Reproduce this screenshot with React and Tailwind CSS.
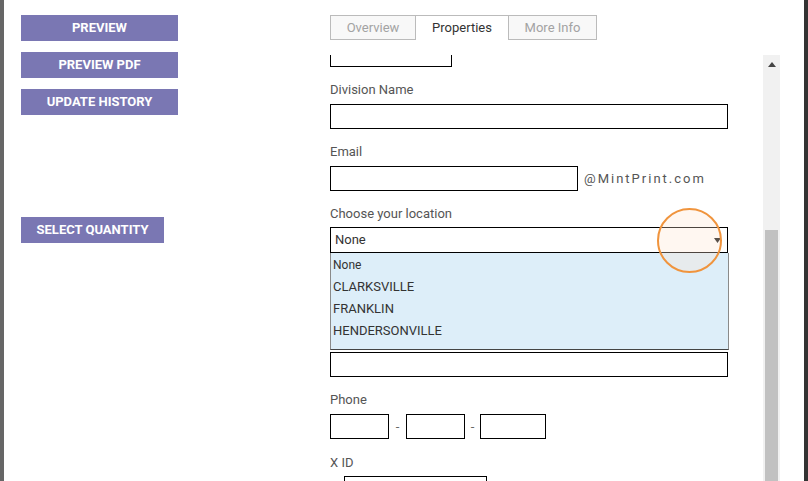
import React from "react";

const ACTIONS = ["PREVIEW", "PREVIEW PDF", "UPDATE HISTORY"];
const LOCATIONS = ["None", "CLARKSVILLE", "FRANKLIN", "HENDERSONVILLE"];

function ActionButton({ label, className = "w-[157px]" }) {
  return (
    <button
      className={`flex h-[26px] items-center justify-center bg-[#7a77b3] text-[13px] font-bold text-white ${className}`}
    >
      {label}
    </button>
  );
}

function Label({ children, className = "" }) {
  return <div className={`h-[16px] text-[13px] leading-[16px] text-[#555] ${className}`}>{children}</div>;
}

function Field({ className = "w-[397px]" }) {
  return <div className={`h-[25px] border border-black bg-white ${className}`} />;
}

function Tabs() {
  return (
    <div className="flex h-[25px] text-[13px]">
      <div className="flex w-[86px] items-center justify-center border border-[#bbb] bg-[#f8f8f8] text-[#a3a3a3]">
        Overview
      </div>
      <div className="flex w-[92px] items-center justify-center border-t border-[#bbb] text-[#333]">
        Properties
      </div>
      <div className="flex w-[89px] items-center justify-center border border-[#bbb] bg-[#f8f8f8] text-[#a3a3a3]">
        More Info
      </div>
    </div>
  );
}

function LocationSelect() {
  return (
    <div className="relative w-[398px]">
      <div className="flex h-[26px] items-center justify-between border border-black bg-white pl-[4px] pr-[6px] text-[13px] text-[#333]">
        <span>None</span>
        <svg width="7" height="5" viewBox="0 0 7 5">
          <path d="M0 0h7L3.5 5z" fill="#111" />
        </svg>
      </div>
      {/* open option list */}
      <div className="absolute left-0 top-[26px] z-10 w-[399px] border border-t-0 border-[#8a8a8a] border-b-[#444] bg-[#ddeef9] pb-[7px] pt-[1px]">
        {LOCATIONS.map((loc, i) => (
          <div
            key={loc}
            className={`h-[22px] pl-[2px] leading-[22px] text-[#333] ${i === 0 ? "text-[12px]" : "text-[13px]"}`}
          >
            {loc}
          </div>
        ))}
      </div>
      {/* click highlight */}
      <div className="pointer-events-none absolute left-[327px] top-[-19px] z-20 h-[65px] w-[65px] rounded-full border-[2.5px] border-[#f0943d] bg-[#ffe6d2]/30" />
    </div>
  );
}

function Scrollbar() {
  return (
    <div className="relative w-[17px] bg-[#f1f1f1]">
      <svg className="absolute left-[5px] top-[7px]" width="8" height="5" viewBox="0 0 8 5">
        <path d="M4 0L8 5H0z" fill="#444" />
      </svg>
      <div className="absolute bottom-0 left-[2px] top-[175px] w-[13px] bg-[#c1c1c1]" />
    </div>
  );
}

export default function App() {
  return (
    <div className="flex h-[481px] w-[808px] overflow-hidden bg-white font-['Roboto',sans-serif]">
      <div className="w-[4px] bg-[#666]" />

      <div className="flex w-[326px] flex-col gap-[11px] pl-[17px] pt-[15px]">
        {ACTIONS.map((a) => (
          <ActionButton key={a} label={a} />
        ))}
        <ActionButton label="SELECT QUANTITY" className="mt-[91px] w-[143px]" />
      </div>

      <div className="flex w-[450px] flex-col pt-[15px]">
        <Tabs />
        <div className="mt-[15px] flex flex-1 overflow-hidden">
          <div className="w-[433px] overflow-hidden">
            <div className="mt-[-13px] flex flex-col">
              <Field className="w-[122px]" />

              <Label className="mt-[15px]">Division Name</Label>
              <Field className="mt-[6px] w-[398px]" />

              <Label className="mt-[15px]">Email</Label>
              <div className="mt-[6px] flex items-center">
                <Field className="w-[248px]" />
                <span className="ml-[6px] text-[13px] tracking-[2px] text-[#555]">@MintPrint.com</span>
              </div>

              <Label className="mt-[15px]">Choose your location</Label>
              <div className="mt-[5px]">
                <LocationSelect />
              </div>

              {/* fields under the open list */}
              <Label className="mt-[14px]" />
              <Field className="mt-[7px] w-[398px]" />
              <Label className="mt-[15px]" />
              <Field className="mt-[6px] w-[398px]" />

              <Label className="mt-[15px]">Phone</Label>
              <div className="mt-[6px] flex items-center text-[13px] text-[#666]">
                <Field className="w-[59px]" />
                <span className="w-[17px] text-center">-</span>
                <Field className="w-[59px]" />
                <span className="w-[15px] text-center">-</span>
                <Field className="w-[66px]" />
              </div>

              <Label className="mt-[16px]">X ID</Label>
              <Field className="ml-[14px] mt-[5px] w-[143px]" />
            </div>
          </div>
          <Scrollbar />
        </div>
      </div>

      <div className="w-[24px]" />
      <div className="w-[4px] bg-[#333]" />
    </div>
  );
}
